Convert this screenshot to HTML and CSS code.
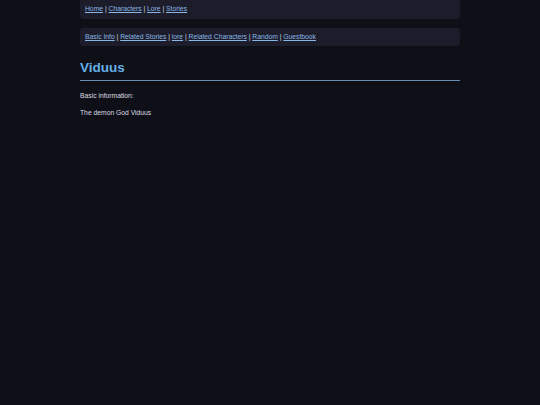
FILE: index.html
```html
<!DOCTYPE html>
<html>
<head>
<meta charset="utf-8">
<link rel="stylesheet" href="styles.css">
</head>
<body>
<div class="page">
  <nav class="nav nav-top">
    <a href="#">Home</a> | <a href="#">Characters</a> | <a href="#">Lore</a> | <a href="#">Stories</a>
  </nav>
  <nav class="nav nav-sub">
    <a href="#">Basic Info</a> | <a href="#">Related Stories</a> | <a href="#">lore</a> | <a href="#">Related Characters</a> | <a href="#">Random</a> | <a href="#">Guestbook</a>
  </nav>
  <h1 class="title">Viduus</h1>
  <p class="text">Basic information:</p>
  <p class="text">The demon God Viduus</p>
</div>
</body>
</html>
```
FILE: styles.css
```css
html, body {
  margin: 0;
  padding: 0;
  background: #0f0f17;
}
body {
  font-family: "Liberation Sans", Arial, sans-serif;
  font-size: 6.75px;
  line-height: 1.5;
  color: #dcdce2;
}
.page {
  width: 380px;
  margin: 0 auto;
}
.nav {
  background: #1c1c2a;
  padding: 4.2px 5px;
  border-radius: 3.4px;
  color: #d8d8e0;
}
.nav-top {
  border-radius: 0 0 3.4px 3.4px;
}
.nav-sub {
  margin-top: 9px;
}
.nav a {
  color: #8ab8e6;
  text-decoration: underline;
}
.title {
  margin: 13px 0 10px;
  font-size: 13.5px;
  line-height: 1.3;
  color: #64b0e6;
  padding-bottom: 3.5px;
  border-bottom: 1.7px solid #6a8db2;
}
.text {
  margin: 7px 0;
}
```
